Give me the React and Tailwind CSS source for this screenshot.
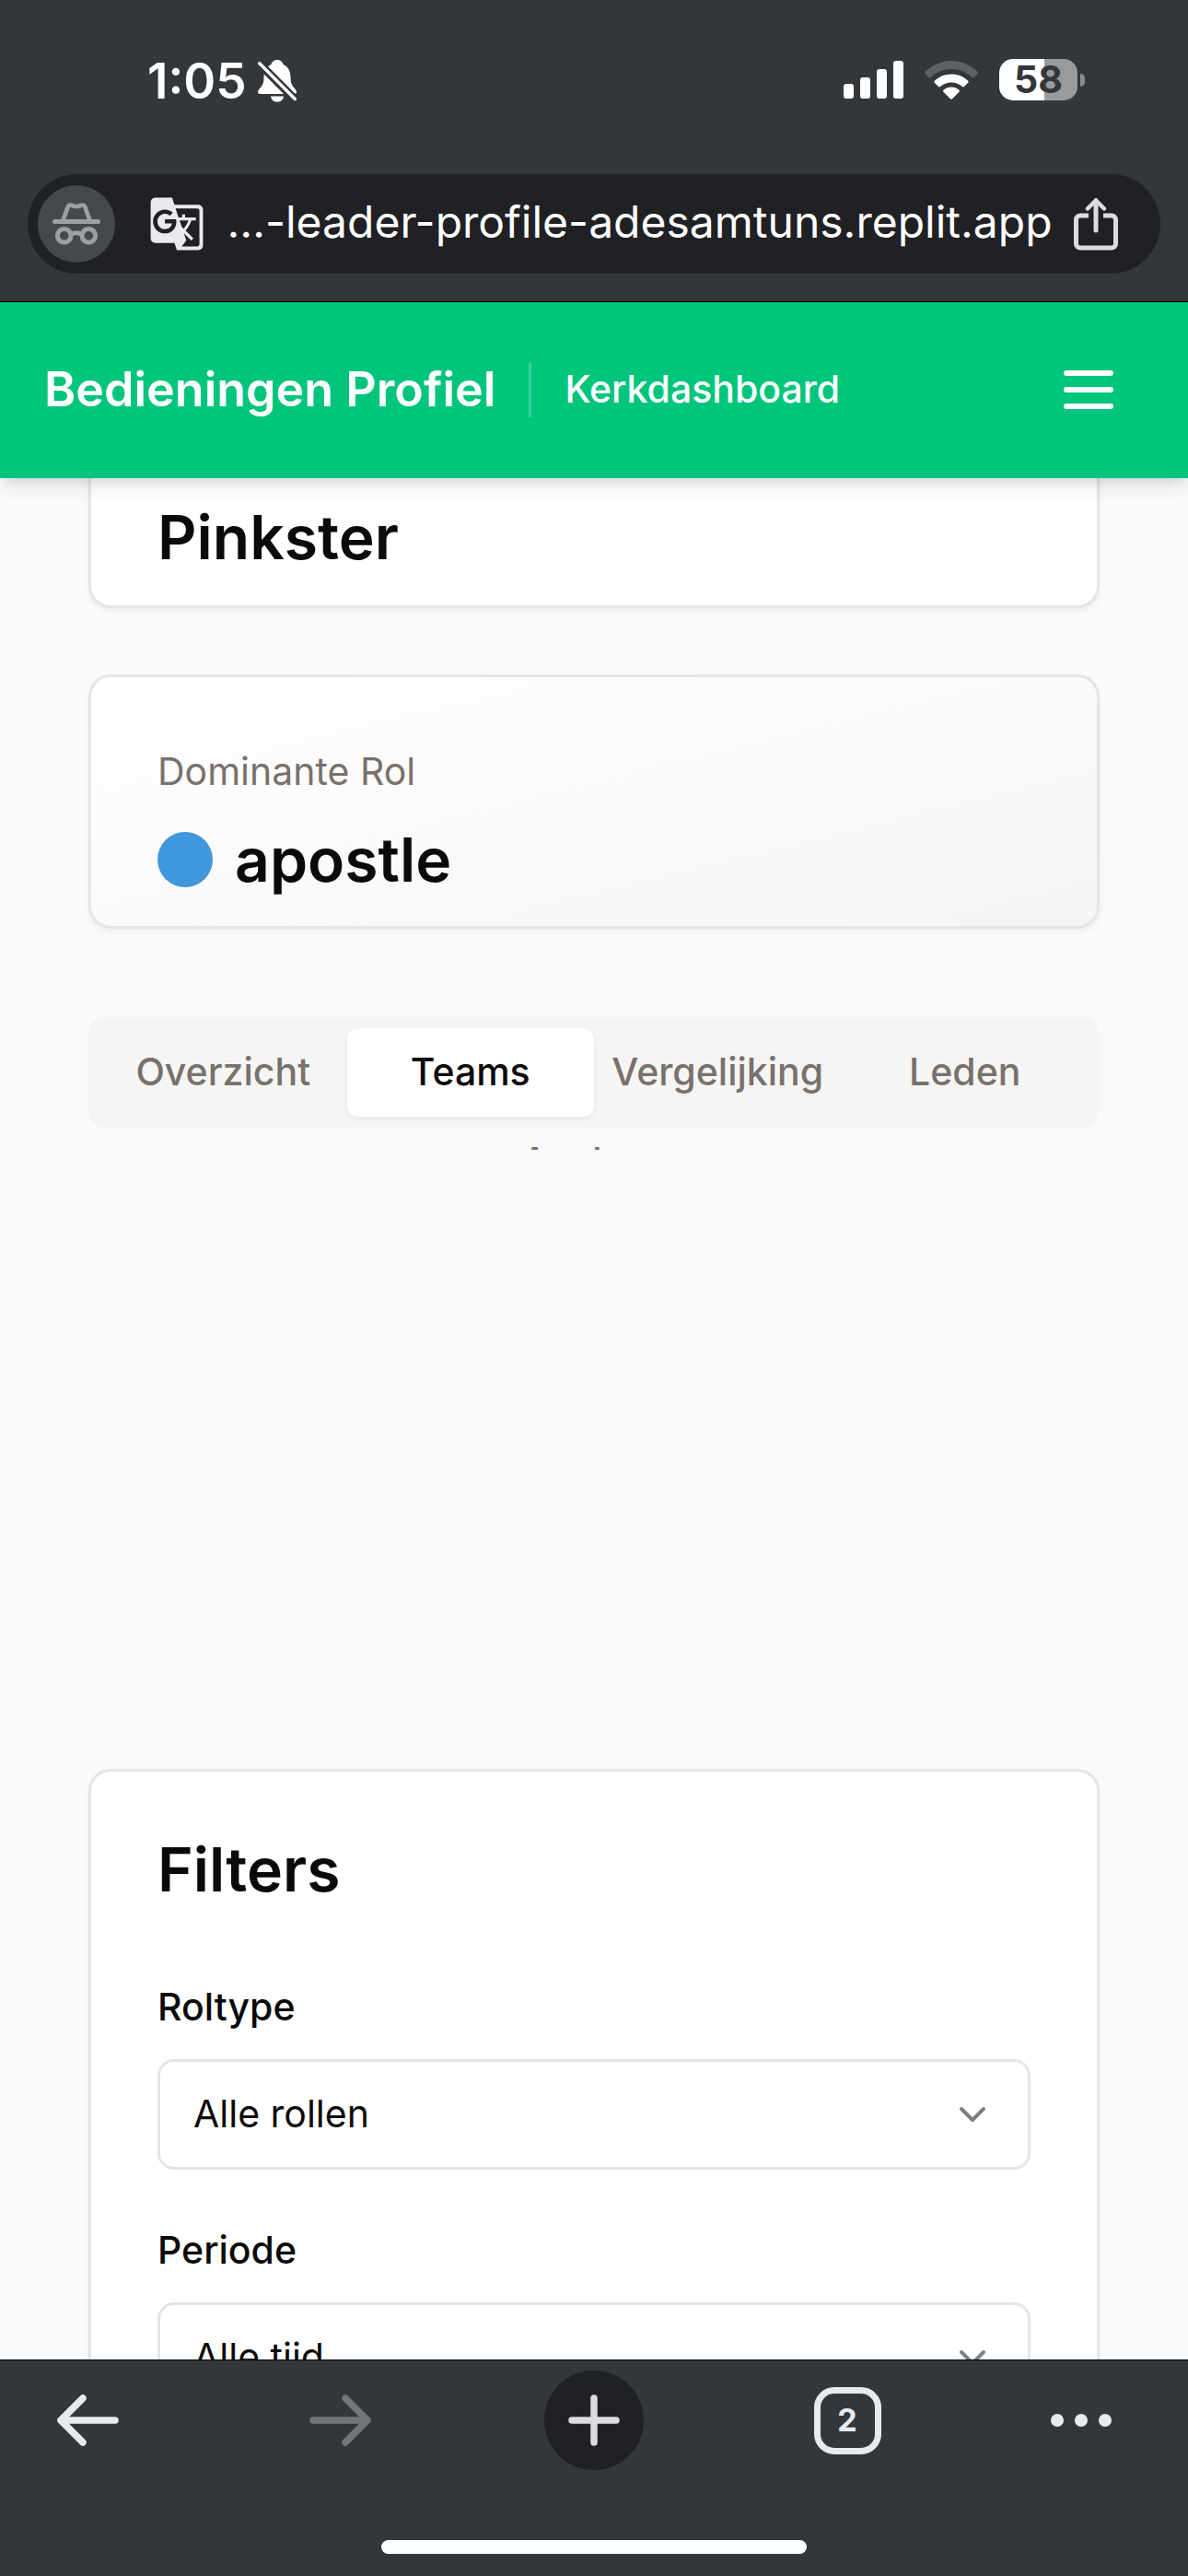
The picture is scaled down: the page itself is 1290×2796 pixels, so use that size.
import { ChevronDown } from "lucide-react";
import { MdGTranslate } from "react-icons/md";

function BellOffIcon() {
  return (
    <svg viewBox="0 0 42 46" className="h-[46px] w-[42px]" fill="none" aria-label="Stil">
      <path
        d="M21 0c-3.500 0-6 2.200-6.500 5C9 7.500 6.500 12 6.500 19c0 6-1.500 8.500-4 11.500C.8 32.500 0 33.700 0 35c0 1.300 1 2 2.500 2h37c1.500 0 2.500-.7 2.500-2 0-1.300-.8-2.500-2.500-4.500-2.500-3-4-5.500-4-11.500 0-7-2.500-11.500-8-14-.5-2.800-3-5-6.500-5Z"
        fill="#fff"
      />
      <path d="M14 39.500h14c-.6 4-3.300 6-7 6s-6.400-2-7-6Z" fill="#fff" />
      <path d="M2 4.500 40 42.500" stroke="#33373a" strokeWidth="9" />
      <path d="M1.800 3.800 40.300 42.500" stroke="#fff" strokeWidth="3.400" strokeLinecap="round" />
    </svg>
  );
}

function SignalIcon() {
  return (
    <svg viewBox="0 0 65 41" className="h-[41px] w-[65px]" fill="#fff" aria-label="Signaal">
      <rect x="0" y="25" width="11" height="16" rx="3" />
      <rect x="18" y="18" width="11" height="23" rx="3" />
      <rect x="36" y="9" width="11" height="32" rx="3" />
      <rect x="54" y="0" width="11" height="41" rx="3" />
    </svg>
  );
}

function WifiIcon() {
  return (
    <svg viewBox="0 0 58 42" className="h-[42px] w-[58px]" aria-label="Wifi">
      <path
        d="M29 0C18 0 8 4.400.8 11.600c-.8.8-.8 1.800 0 2.600l3.600 3.600c.8.8 1.700.8 2.500 0C12.600 12.200 20.400 8.900 29 8.900s16.400 3.300 22.100 8.900c.8.8 1.700.8 2.500 0l3.600-3.600c.8-.8.800-1.800 0-2.600C50 4.400 40 0 29 0Z"
        fill="#5e6062"
      />
      <path
        d="M29 14.500c-7 0-13.200 2.600-18 7-.8.8-.8 1.700 0 2.500l3.800 3.800c.8.8 1.600.8 2.500 0 3.200-2.800 7.200-4.400 11.700-4.400s8.500 1.600 11.700 4.400c.9.8 1.700.8 2.500 0L47 24c.8-.8.8-1.700 0-2.500-4.800-4.400-11-7-18-7Z"
        fill="#fff"
      />
      <path
        d="M29 28.500c-3.200 0-6 1.100-8.200 3-.9.8-.9 1.700-.1 2.500l7 7c.9.900 1.700.9 2.600 0l7-7c.8-.8.8-1.700-.1-2.500-2.200-1.900-5-3-8.200-3Z"
        fill="#fff"
      />
    </svg>
  );
}

function Battery() {
  return (
    <div className="flex items-center gap-[3px]">
      <div className="flex h-[45px] w-[85px] items-center justify-center rounded-[15px] bg-[linear-gradient(90deg,#ffffff_58%,#999a9c_58%)]">
        <span className="text-[41px] leading-[45px] font-bold text-[#33373a]">58</span>
      </div>
      <div className="h-[14px] w-[5px] rounded-r-full bg-[#8b8d8f]" />
    </div>
  );
}

function IncognitoIcon() {
  return (
    <svg
      viewBox="0 0 52 46"
      className="h-[46px] w-[52px]"
      fill="none"
      stroke="#9aa0a6"
      strokeWidth="5"
      strokeLinecap="round"
      strokeLinejoin="round"
    >
      <path d="M2.500 20.500h47" />
      <path d="M11.500 19 16.700 4.600c.5-1.500 2-2.400 3.500-1.900l3.500 1.100c1.500.5 3.100.5 4.600 0l3.500-1.100c1.500-.5 3 .4 3.500 1.900L40.500 19" strokeWidth="4.600" />
      <circle cx="12.700" cy="35.800" r="7.300" />
      <circle cx="39.300" cy="35.800" r="7.300" />
      <path d="M20 34.500c3.500-2.200 8.500-2.200 12 0" />
    </svg>
  );
}

function ShareIcon() {
  return (
    <svg
      viewBox="0 0 48 57"
      className="h-[57px] w-12"
      fill="none"
      stroke="#dadce0"
      strokeWidth="5"
      strokeLinecap="round"
      strokeLinejoin="round"
    >
      <path d="M16 19h-9A4.500 4.500 0 0 0 2.500 23.500v26A4.500 4.500 0 0 0 7 54h34a4.500 4.500 0 0 0 4.500-4.500v-26A4.500 4.500 0 0 0 41 19h-9" strokeLinecap="butt" />
      <path d="M24 3v32" />
      <path d="M15 11.500 24 2.500l9 9" strokeWidth="4.500" strokeLinejoin="miter" />
    </svg>
  );
}

function ArrowIcon({ forward }) {
  return (
    <svg
      viewBox="0 0 68 56"
      className={forward ? "h-14 w-[68px] text-[#747577]" : "h-14 w-[68px] text-[#e8eaed]"}
      fill="none"
      stroke="currentColor"
      strokeWidth="7.500"
      strokeLinecap="round"
      strokeLinejoin="round"
    >
      {forward ? <path d="M4 28h59M39 4l24 24-24 24" /> : <path d="M64 28H5M29 4 5 28l24 24" />}
    </svg>
  );
}

function FilterSelect({ id, label, value }) {
  return (
    <div className="flex flex-col gap-9">
      <label htmlFor={id} className="text-[41px] leading-[42px] font-medium">
        {label}
      </label>
      <div className="relative">
        <select
          id={id}
          className="h-[120px] w-full appearance-none rounded-[18px] border-3 border-[#e5e5e5] bg-white px-9 text-[41px] text-[#0c0a09]"
        >
          <option>{value}</option>
        </select>
        <ChevronDown className="pointer-events-none absolute top-9 right-[39px] size-12 text-black/50" strokeWidth={2} />
      </div>
    </div>
  );
}

const tabs = ["Overzicht", "Teams", "Vergelijking", "Leden"];

export default function App() {
  return (
    <div className="flex h-screen flex-col overflow-hidden bg-slate-50 font-['Inter',sans-serif] text-[#0c0a09]">
      <div className="shrink-0 border-b border-black bg-[#33373a] text-white">
        <div className="flex h-[189px] items-start justify-between pt-14 pr-28 pl-40">
          <div className="flex h-16 items-center gap-3">
            <span className="text-[53px] leading-none font-semibold">1:05</span>
            <BellOffIcon />
          </div>
          <div className="flex h-[61px] items-center gap-[23px]">
            <SignalIcon />
            <WifiIcon />
            <Battery />
          </div>
        </div>
        <div className="mx-[30px] mb-[30px] flex h-[108px] items-center rounded-full bg-[#202124] pr-[46px] pl-[11px]">
          <div className="flex size-[84px] shrink-0 items-center justify-center rounded-full bg-[#44494c]">
            <IncognitoIcon />
          </div>
          <button type="button" aria-label="Vertalen" className="ml-9 shrink-0">
            <MdGTranslate className="size-[62px] text-[#e8eaed]" />
          </button>
          <span className="min-w-0 flex-1 pb-1 text-center text-[48px] leading-none whitespace-nowrap">
            …-leader-profile-adesamtuns.replit.app
          </span>
          <button type="button" aria-label="Delen" className="shrink-0">
            <ShareIcon />
          </button>
        </div>
      </div>

      <header className="relative z-10 flex h-[191px] shrink-0 items-center bg-[#02c57c] pr-[81px] pb-0.5 pl-12 text-white shadow-[0_12px_18px_-3px_rgba(0,0,0,0.1),0_6px_12px_-6px_rgba(0,0,0,0.1)]">
        <span className="text-[52px] leading-none font-semibold">Bedieningen Profiel</span>
        <div className="mx-9 h-[60px] w-[3px] bg-white/20" />
        <a href="#dashboard" className="text-[41px] leading-none font-medium">
          Kerkdashboard
        </a>
        <button type="button" aria-label="Menu" className="ml-auto flex flex-col gap-3">
          <span className="h-1.5 w-[54px] rounded-full bg-white" />
          <span className="h-1.5 w-[54px] rounded-full bg-white" />
          <span className="h-1.5 w-[54px] rounded-full bg-white" />
        </button>
      </header>

      <main className="min-h-0 flex-1 overflow-hidden px-24">
        <section className="rounded-b-3xl border-3 border-t-0 border-[#e7e5e4] bg-white px-[72px] pt-7 pb-[38px] shadow-[0_3px_6px_rgba(0,0,0,0.05)]">
          <h2 className="text-[66px] leading-[72px] font-semibold">Pinkster</h2>
        </section>

        <section className="mt-[72px] rounded-3xl border-3 border-[#e7e5e4] bg-linear-to-br from-white to-[#f5f5f4] px-[72px] pt-[72px] pb-9 shadow-[0_3px_6px_rgba(0,0,0,0.05)]">
          <p className="text-[41px] leading-[60px] text-[#78716c]">Dominante Rol</p>
          <div className="mt-[30px] flex items-center gap-6">
            <span className="size-[60px] rounded-full bg-[#4197dc]" />
            <span className="text-[66px] leading-[72px] font-semibold">apostle</span>
          </div>
        </section>

        <div role="tablist" className="mt-24 grid h-[120px] grid-cols-4 rounded-[18px] bg-[#f5f5f4] p-3">
          {tabs.map((tab) => (
            <button
              key={tab}
              type="button"
              role="tab"
              aria-selected={tab === "Teams"}
              className={
                tab === "Teams"
                  ? "rounded-xl bg-white text-[41px] font-medium shadow-[0_3px_6px_rgba(0,0,0,0.05)]"
                  : "rounded-xl text-[41px] font-medium text-[#78716c]"
              }
            >
              {tab}
            </button>
          ))}
        </div>
        <div className="mt-1.5 mb-[672px] h-[18px] overflow-hidden text-center text-[41px] leading-[60px] font-medium text-[#78716c]">
          Analyse
        </div>

        <section className="rounded-3xl border-3 border-[#e7e5e4] bg-white px-[72px] pt-[70px] pb-[72px] shadow-[0_3px_6px_rgba(0,0,0,0.05)]">
          <h2 className="text-[66px] leading-[72px] font-semibold">Filters</h2>
          <div className="mt-[92px] flex flex-col gap-[66px]">
            <FilterSelect id="roltype" label="Roltype" value="Alle rollen" />
            <FilterSelect id="periode" label="Periode" value="Alle tijd" />
          </div>
        </section>
      </main>

      <footer className="shrink-0 border-t border-black bg-[#33373a]">
        <nav className="flex h-[130px] items-center justify-between px-[41px]">
          <button type="button" aria-label="Terug" className="flex w-[108px] justify-center">
            <ArrowIcon />
          </button>
          <button type="button" aria-label="Vooruit" className="flex w-[108px] justify-center">
            <ArrowIcon forward />
          </button>
          <button
            type="button"
            aria-label="Nieuw tabblad"
            className="flex size-[108px] items-center justify-center rounded-full bg-[#202124]"
          >
            <svg viewBox="0 0 56 56" className="size-14" stroke="#dadce0" strokeWidth="7.500" strokeLinecap="round">
              <path d="M4 28h48M28 4v48" />
            </svg>
          </button>
          <button type="button" aria-label="Tabbladen" className="flex w-[108px] justify-center">
            <span className="flex size-[73px] items-center justify-center rounded-[22px] border-[7px] border-[#e8eaed] text-[34px] leading-none font-bold text-[#e8eaed]">
              2
            </span>
          </button>
          <button type="button" aria-label="Meer" className="flex w-[108px] justify-start gap-3">
            <span className="size-[14px] rounded-full bg-[#e8eaed]" />
            <span className="size-[14px] rounded-full bg-[#e8eaed]" />
            <span className="size-[14px] rounded-full bg-[#e8eaed]" />
          </button>
        </nav>
        <div className="mx-auto mt-[65px] mb-6 h-[15px] w-[462px] rounded-full bg-white" />
      </footer>
    </div>
  );
}
